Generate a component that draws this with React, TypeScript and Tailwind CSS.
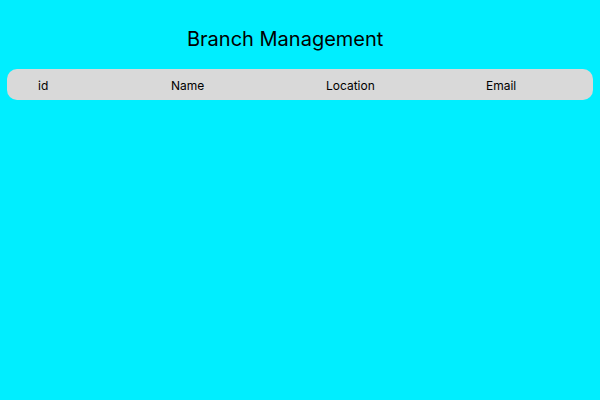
export default function App() {
  return (
    <div className="w-[600px] h-[400px] bg-[#00eeff] font-['Inter',sans-serif] text-black overflow-hidden">
      <div className="pt-[25px] pl-[187px] text-[20px] leading-[28px]">Branch Management</div>
      <div className="mt-[16px] mx-[7px] h-[31px] pt-[2px] rounded-[10px] bg-[#d9d9d9] flex items-center text-[12px]">
        <div className="w-[164px] pl-[31px]">id</div>
        <div className="w-[155px]">Name</div>
        <div className="w-[160px]">Location</div>
        <div>Email</div>
      </div>
    </div>
  );
}
